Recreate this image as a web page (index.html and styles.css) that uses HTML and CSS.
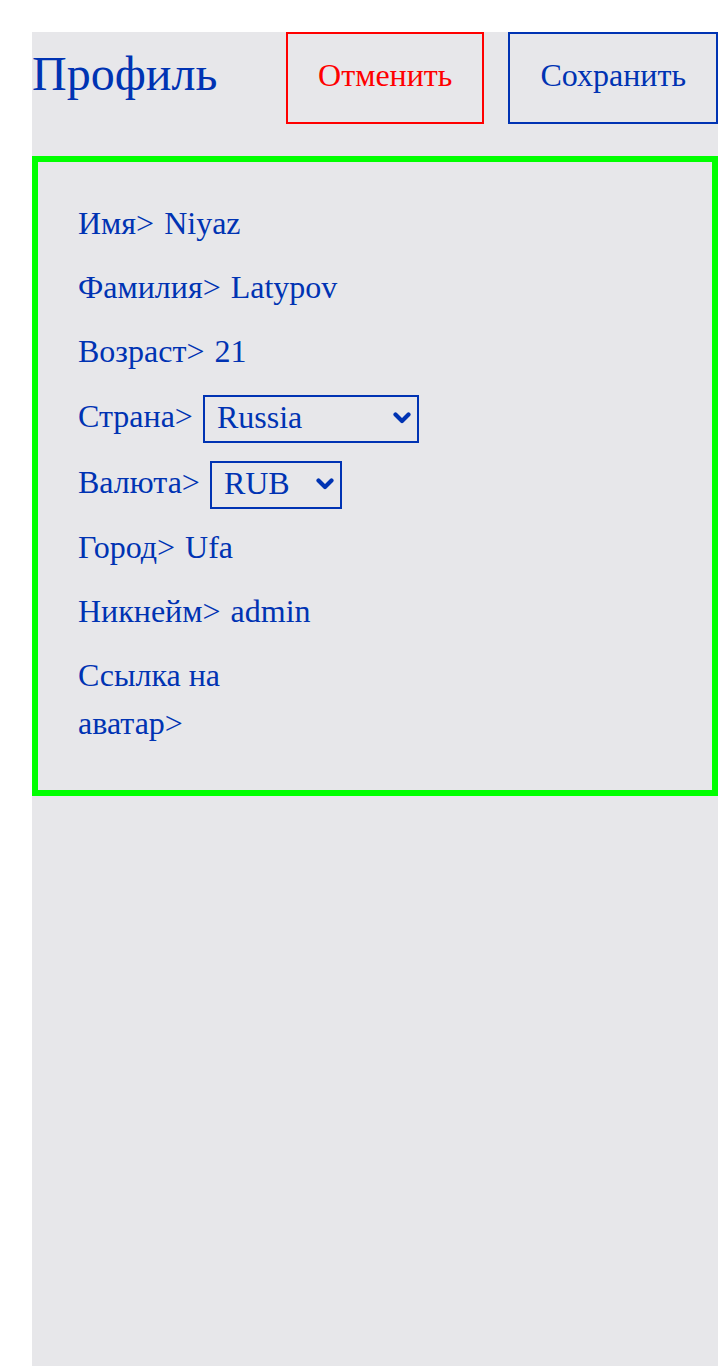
FILE: index.html
```html
<!DOCTYPE html>
<html lang="ru">
<head>
<meta charset="utf-8">
<title>Профиль</title>
<link rel="stylesheet" href="styles.css">
</head>
<body>
<div class="panel">
  <div class="header">
    <h1 class="title">Профиль</h1>
    <div class="actions">
      <button class="btn btn-cancel">Отменить</button>
      <button class="btn btn-save">Сохранить</button>
    </div>
  </div>
  <div class="card">
    <div class="row"><span class="label">Имя&gt;</span><span class="value">Niyaz</span></div>
    <div class="row"><span class="label">Фамилия&gt;</span><span class="value">Latypov</span></div>
    <div class="row"><span class="label">Возраст&gt;</span><span class="value">21</span></div>
    <div class="row row-select"><span class="label">Страна&gt;</span>
      <span class="select-wrap">
        <select class="select select-country"><option>Russia</option><option>USA</option></select>
        <svg class="chevron" width="18" height="12" viewBox="0 0 18 12"><path d="M2.5 2.5 L9 9 L15.5 2.5" fill="none" stroke="#0033b3" stroke-width="4.2" stroke-linecap="round" stroke-linejoin="round"/></svg>
      </span>
    </div>
    <div class="row row-select"><span class="label">Валюта&gt;</span>
      <span class="select-wrap">
        <select class="select select-currency"><option>RUB</option><option>USD</option></select>
        <svg class="chevron" width="18" height="12" viewBox="0 0 18 12"><path d="M2.5 2.5 L9 9 L15.5 2.5" fill="none" stroke="#0033b3" stroke-width="4.2" stroke-linecap="round" stroke-linejoin="round"/></svg>
      </span>
    </div>
    <div class="row"><span class="label">Город&gt;</span><span class="value">Ufa</span></div>
    <div class="row"><span class="label">Никнейм&gt;</span><span class="value">admin</span></div>
    <div class="row row-wrap"><span class="label label-wrap">Ссылка на аватар&gt;</span><span class="value value-empty"></span></div>
  </div>
</div>
</body>
</html>
```

FILE: styles.css
```css
html, body {
  margin: 0;
  padding: 0;
  background: #ffffff;
}
body {
  padding: 32px 0 0 32px;
  font-family: "Liberation Serif", "Times New Roman", serif;
  color: #0033b3;
}
.panel {
  background: #e7e7ea;
  min-height: calc(100vh - 32px);
}
.header {
  display: flex;
  align-items: center;
  height: 92px;
}
.title {
  flex: 1;
  margin: 0 0 8px 0;
  font-size: 48px;
  font-weight: normal;
  line-height: 56px;
  color: #0033b3;
}
.actions {
  display: flex;
  gap: 24px;
}
.btn {
  height: 92px;
  padding: 0 30px 5px 30px;
  background: transparent;
  font-family: "Liberation Serif", "Times New Roman", serif;
  font-size: 32px;
  border: 2px solid;
  border-radius: 0;
}
.btn-cancel {
  color: #ff0000;
  border-color: #ff0000;
}
.btn-save {
  color: #0033b3;
  border-color: #0033b3;
}
.card {
  margin-top: 32px;
  border: 6px solid #00ff00;
  padding: 37px 40px 43px 40px;
  display: flex;
  flex-direction: column;
  gap: 16px;
}
.row {
  display: flex;
  align-items: center;
  font-size: 32px;
  line-height: 48px;
  min-height: 48px;
  white-space: nowrap;
}
.value {
  margin-left: 10px;
}
.row-select {
  align-items: flex-start;
  height: 50px;
  min-height: 0;
}
.row-select .label {
  margin-top: 1px;
}
.row-wrap {
  white-space: normal;
}
.label-wrap {
  width: 150px;
}
.value-empty {
  flex: 1;
}
.select-wrap {
  position: relative;
  display: inline-flex;
  margin-left: 10px;
  margin-top: 4px;
}
.select {
  appearance: none;
  -webkit-appearance: none;
  height: 48px;
  font-family: "Liberation Serif", "Times New Roman", serif;
  font-size: 32px;
  color: #0033b3;
  background: transparent;
  border: 2px solid #0033b3;
  border-radius: 0;
  padding: 0 8px 4px 12px;
  outline: none;
}
.select-country {
  width: 216px;
}
.select-currency {
  width: 132px;
}
.chevron {
  position: absolute;
  right: 8px;
  top: 17px;
  pointer-events: none;
}
```
